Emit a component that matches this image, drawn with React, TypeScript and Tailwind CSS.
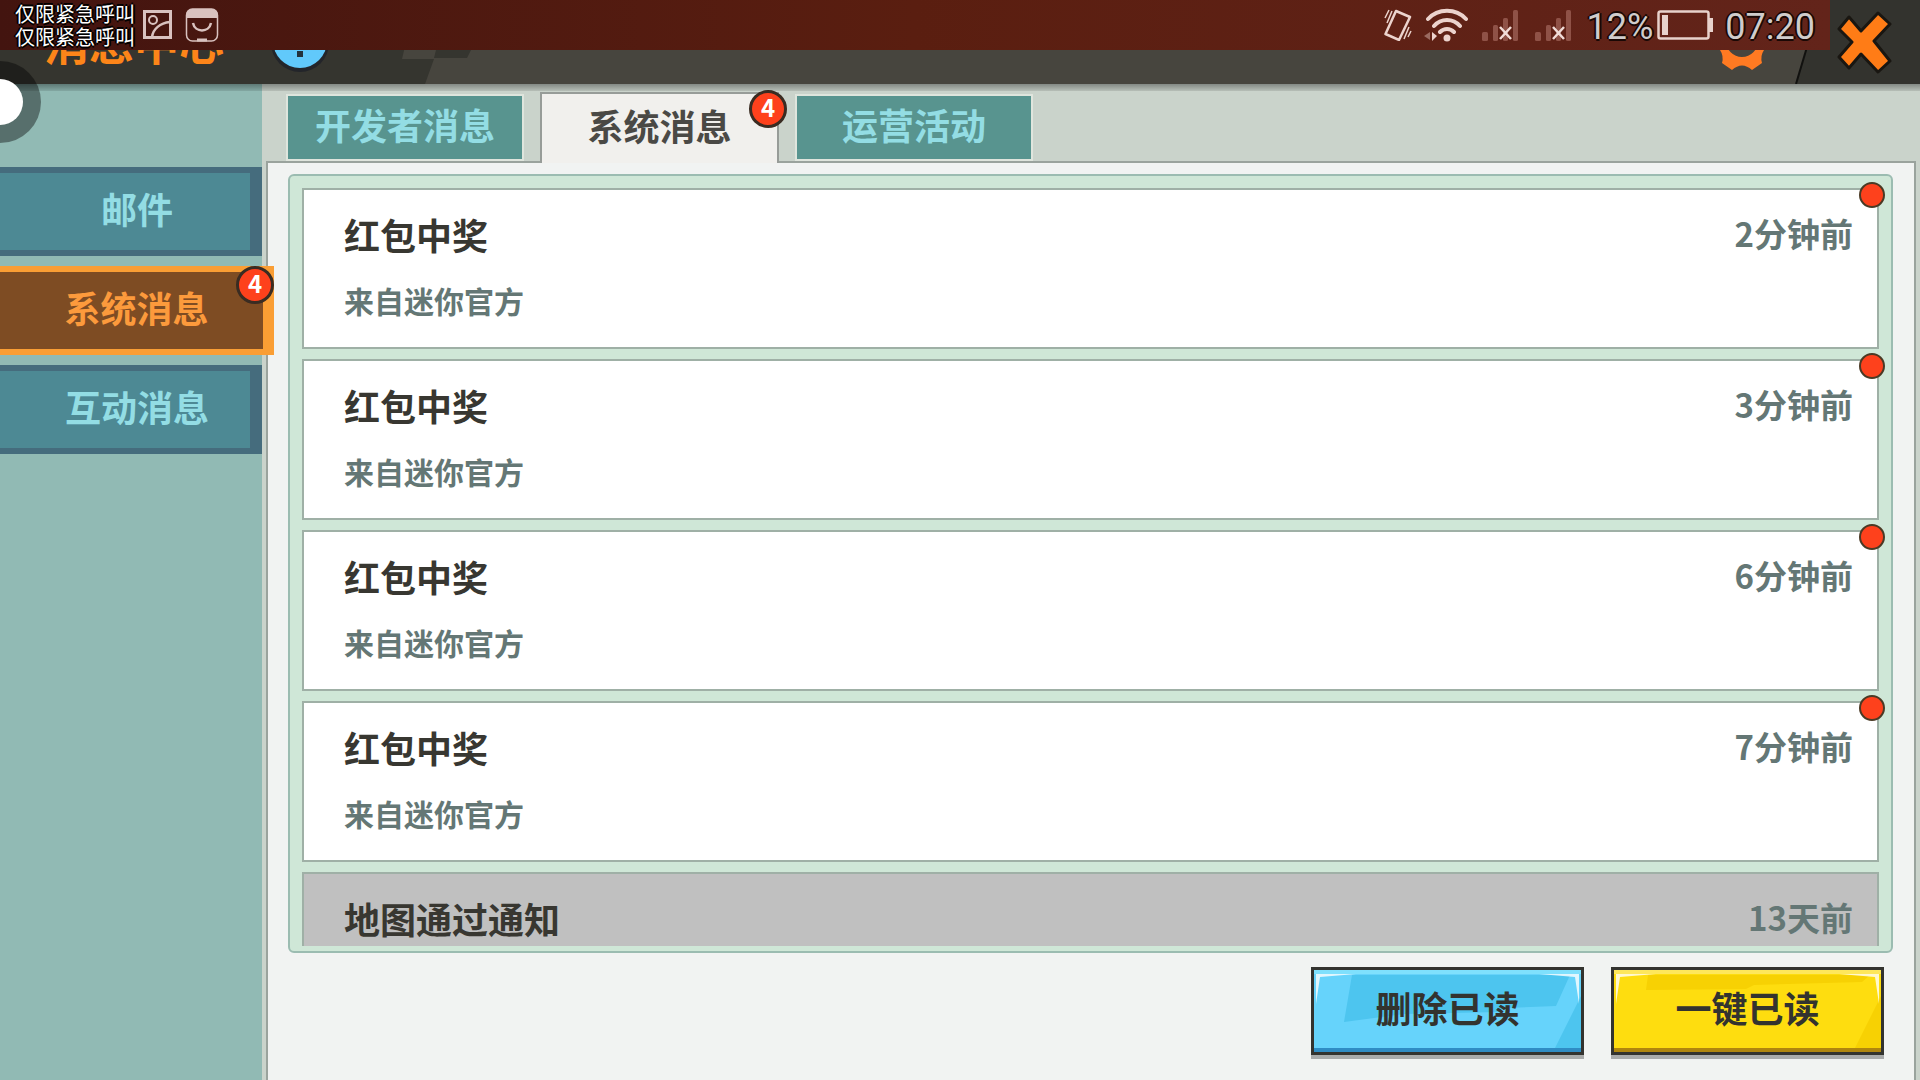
import { clsx } from "clsx";

const sideItems = [
  { label: "邮件", unread: 0 },
  { label: "系统消息", unread: 4, active: true },
  { label: "互动消息", unread: 0 },
];

const tabs = [
  { label: "开发者消息", unread: 0 },
  { label: "系统消息", unread: 4, active: true },
  { label: "运营活动", unread: 0 },
];

const messages = [
  { title: "红包中奖", from: "来自迷你官方", time: "2分钟前", read: false },
  { title: "红包中奖", from: "来自迷你官方", time: "3分钟前", read: false },
  { title: "红包中奖", from: "来自迷你官方", time: "6分钟前", read: false },
  { title: "红包中奖", from: "来自迷你官方", time: "7分钟前", read: false },
  { title: "地图通过通知", from: "", time: "13天前", read: true },
];

function Badge({ count, className }: { count: number; className: string }) {
  return (
    <span
      className={clsx(
        "absolute flex size-[38px] items-center justify-center rounded-full border-[3px] border-[#3a2c22] bg-[#fe411c] pb-1 text-2xl leading-none font-bold text-white",
        className
      )}
    >
      {count}
    </span>
  );
}

function Signal() {
  return (
    <svg className="h-8 w-9" viewBox="0 0 36 32" fill="none">
      <g fill="#8f5247">
        <rect x="0" y="23" width="6" height="9" rx="1.500" />
        <rect x="11" y="16" width="5" height="16" rx="1.500" />
        <rect x="21" y="9" width="5" height="23" rx="1.500" />
        <rect x="31" y="1" width="5" height="31" rx="1.500" />
      </g>
      <path d="M18 18l11 12M29 18L18 30" stroke="#f0dcd7" strokeWidth="2.500" />
    </svg>
  );
}

function StatusBar() {
  return (
    <div className="absolute top-0 left-0 z-20 flex h-[50px] w-[calc(100%-90px)] items-center justify-between bg-linear-to-r from-[#43140f] via-[#5a1e10] to-[#63241a] pr-[15px] pl-[15px]">
      <div className="flex items-center gap-2">
        <div className="text-xl leading-[23px] text-white [text-shadow:-2px_0_#000,2px_0_#000,0_-2px_#000,0_2px_#000]">
          <p>仅限紧急呼叫</p>
          <p>仅限紧急呼叫</p>
        </div>
        <svg className="h-[34px] w-[76px]" viewBox="0 0 76 34" fill="none" stroke="#d9c2bf">
          <path d="M1.500 3.500h26v26h-26z" strokeWidth="3" />
          <circle cx="10" cy="12" r="4" strokeWidth="2" />
          <path d="M9 29c1-8 8-14 18-15" strokeWidth="2.500" />
          <rect x="43.500" y="1" width="31" height="32" rx="6" strokeWidth="1.500" />
          <path d="M43 10V7a6 6 0 0 1 6-6h20a6 6 0 0 1 6 6v3z" fill="#d9c2bf" stroke="none" />
          <path d="M50 15c2 10 16 10 18 0" strokeWidth="2.500" />
          <path d="M54 32h10" strokeWidth="3" />
        </svg>
      </div>
      <div className="flex items-center font-[Roboto] text-4xl leading-none text-[#d0cccb] [text-shadow:-2px_0_#1a0805,2px_0_#1a0805,0_-2px_#1a0805,0_2px_#1a0805]">
        <svg className="mr-3 h-8 w-7" viewBox="0 0 28 32" fill="none" stroke="#ecd3cd" strokeWidth="2.500">
          <path d="M12 2L26 8 15 31 1.500 25z" strokeLinejoin="round" />
          <path d="M8 2L3 14M5 1L1 9M25 18l-5 12M27 22l-3 6" strokeWidth="1.500" />
        </svg>
        <svg className="mr-[14px] h-[34px] w-11" viewBox="0 0 44 34" fill="none" stroke="#ecd3cd" strokeWidth="4" strokeLinecap="round">
          <path d="M4 11c10-11 28-11 38 0M10 18c7-8 19-8 26 0M16 24c4-4 10-4 14 0" />
          <circle cx="23" cy="30" r="3.500" fill="#ecd3cd" stroke="none" />
          <path d="M0 28l6-4v8z" fill="#9a6a60" stroke="none" />
          <path d="M8 24v9l5-5z" fill="#ecd3cd" stroke="none" />
        </svg>
        <Signal />
        <span className="w-[17px]" />
        <Signal />
        <span className="ml-4 pt-1">12%</span>
        <svg className="mr-3 ml-1 h-[30px] w-14" viewBox="0 0 56 30" fill="none">
          <rect x="1.500" y="1.500" width="50" height="27" rx="2" stroke="#e8d2cc" strokeWidth="2.500" />
          <rect x="5" y="5" width="6" height="20" fill="#e8d2cc" />
          <path d="M52 8h4v14h-4z" fill="#e8d2cc" />
        </svg>
        <span className="pt-1">07:20</span>
      </div>
    </div>
  );
}

function Header() {
  return (
    <header className="relative flex h-[84px] shrink-0 items-center justify-between bg-[#35352f] pl-11">
      <svg className="absolute inset-y-0 right-0 left-[401px] h-full w-[calc(100%-401px)]" viewBox="0 0 1519 84" preserveAspectRatio="none">
        <path d="M40 0H1519V84H24L33 59H1L5 42H67L63 58H36z" fill="#47453e" />
        <path d="M35 50H70L66 58H33z" fill="#35352f" />
        <path d="M1420 0H1519V84H1395z" fill="#33332e" />
        <path d="M1420 0L1395 84" stroke="#11110f" strokeWidth="2" />
      </svg>
      <div className="relative flex items-center gap-[46px]">
        <h1 className="text-[45px] leading-[80px] font-bold text-[#fd8519]">消息中心</h1>
        <button type="button" aria-label="帮助" className="size-[60px] rounded-full">
          <svg viewBox="0 0 60 60">
            <circle cx="30" cy="31" r="29" fill="#23252a" />
            <circle cx="30" cy="29" r="27" fill="#61c9fb" />
            <path d="M27 39h6v6h-6zM27 14h6v20h-6z" fill="#23323c" />
          </svg>
        </button>
      </div>
      <div className="relative flex items-center gap-[66px] pr-7">
        <button type="button" aria-label="设置" className="size-14">
          <svg viewBox="0 0 56 56" fill="#ff7a22">
            <path
              fillRule="evenodd"
              d="M18 56L8 49Q10 42 6 36L2 32V24L6 20Q10 14 8 7L18 0Q28 9 38 0L48 7Q46 14 50 20L54 24V32L50 36Q46 42 48 49L38 56Q28 47 18 56ZM28 11a16 16 0 1 0 0 32a16 16 0 1 0 0-32Z"
            />
          </svg>
        </button>
        <button type="button" aria-label="关闭" className="h-[66px] w-14">
          <svg viewBox="0 0 56 66" fill="#ff7c16" stroke="#191611" strokeWidth="3" strokeLinejoin="round">
            <path d="M13 8L25 22 42 4 54 15 38 32 54 52 42 63 25 45 13 59 3 48 16 33 3 20z" />
          </svg>
        </button>
      </div>
    </header>
  );
}

function Sidebar() {
  return (
    <nav className="relative z-10 flex w-[262px] shrink-0 flex-col gap-[10px] bg-[#91bab4] pt-[83px]">
      {sideItems.map((item) => (
        <button
          key={item.label}
          type="button"
          className={clsx(
            "relative flex h-[89px] items-center justify-center border-y-[6px] pb-2 text-4xl font-bold",
            item.active
              ? "w-[274px] border-r-[11px] border-[#fa9e34] bg-[#7e4c23] pl-[10px] text-[#fc9a3c]"
              : "w-full border-r-[12px] border-[#456c7d] bg-[#4d8994] pl-6 text-[#93dde4]"
          )}
        >
          {item.label}
          {item.unread > 0 && <Badge count={item.unread} className="-top-[6px] -right-[11px]" />}
        </button>
      ))}
    </nav>
  );
}

function Tabs() {
  return (
    <div role="tablist" className="relative z-10 flex h-[79px] items-end pl-5">
      {tabs.map((tab) => (
        <button
          key={tab.label}
          type="button"
          role="tab"
          aria-selected={!!tab.active}
          className={clsx(
            "relative flex items-center justify-center text-4xl font-bold",
            tab.active
              ? "mx-4 h-[71px] w-[239px] border-x-2 border-t-2 border-[#979c98] bg-[#f1f0ed] pb-2 text-[#4a4945]"
              : "mb-[2px] h-[67px] w-[238px] border-2 border-[#dfe5dd] bg-[#58948f] pb-2 text-[#93dde4]"
          )}
        >
          {tab.label}
          {tab.unread > 0 && <Badge count={tab.unread} className="-top-1 -right-[10px]" />}
        </button>
      ))}
    </div>
  );
}

function MessageList() {
  return (
    <div className="mr-[21px] ml-5 min-h-0 flex-1 rounded-md border-2 border-[#9bbcb1] bg-[#cfe7d7] pb-[5px]">
      <ul className="flex h-full flex-col gap-[10px] overflow-hidden px-3 pt-3">
        {messages.map((message) => (
          <li
            key={message.time}
            className={clsx(
              "relative h-[161px] shrink-0 border-2 border-[#9fb0a6] pt-5 pr-6 pl-10",
              message.read ? "bg-[#c0c0c0]" : "bg-white"
            )}
          >
            <div className="flex h-12 items-center justify-between">
              <h2 className="text-4xl font-bold text-[#383731]">{message.title}</h2>
              <time className="text-[33px] font-bold text-[#647775]">{message.time}</time>
            </div>
            <p className="mt-6 text-3xl font-bold text-[#647775]">{message.from}</p>
            {!message.read && (
              <span className="absolute -top-2 -right-2 size-[26px] rounded-full border-2 border-[#4a3a25] bg-[#fe411c]" />
            )}
          </li>
        ))}
      </ul>
    </div>
  );
}

function ActionButton({ label, tone }: { label: string; tone: "blue" | "yellow" }) {
  const blue = tone === "blue";
  return (
    <button
      type="button"
      className={clsx(
        "relative h-[88px] w-[273px] border-[3px] border-[#33332f] pb-2 text-4xl font-bold text-[#33332f] shadow-[0_4px_0_#a9abab]",
        blue ? "bg-[#66d3fb]" : "bg-[#fedd0f]"
      )}
    >
      <svg className="absolute inset-0 size-full" viewBox="0 0 267 82" preserveAspectRatio="none">
        <path
          d={blue ? "M38 5H256L242 36 190 38 184 42 90 44 30 52z" : "M34 5H256L248 12 140 15 132 19 32 20z"}
          fill={blue ? "#4dc5ef" : "#f7d103"}
        />
        <path d="M267 26L240 80H267z" fill={blue ? "#4dc5ef" : "#f7d103"} />
        <path d="M0 0H267V4H0z" fill={blue ? "#7fe0fd" : "#fee75c"} />
        <path d="M2 34V4H42L6 7zM265 34V4H225L261 7z" fill="#fff" fillOpacity="0.8" />
        <path d="M0 78H267V82H0z" fill={blue ? "#2f8cc4" : "#b0860e"} />
      </svg>
      <span className="relative">{label}</span>
    </button>
  );
}

export default function App() {
  return (
    <div className="relative flex h-screen flex-col overflow-hidden bg-[#cad3cb] font-['Noto_Sans_CJK_SC',sans-serif]">
      <StatusBar />
      <Header />
      <div className="relative flex min-h-0 flex-1">
        <div className="absolute inset-x-0 top-0 z-20 h-[7px] bg-linear-to-b from-black/35 to-black/10" />
        <Sidebar />
        <main className="flex min-w-0 flex-1 flex-col px-1">
          <Tabs />
          <div className="-mt-[2px] flex min-h-0 flex-1 flex-col border-x-2 border-t-2 border-[#9aa39d] bg-[#f1f3f2] pt-[11px]">
            <MessageList />
            <div className="flex shrink-0 justify-end gap-[27px] pt-[14px] pr-[30px] pb-[25px]">
              <ActionButton label="删除已读" tone="blue" />
              <ActionButton label="一键已读" tone="yellow" />
            </div>
          </div>
        </main>
      </div>

      {/* Floating assist button, half off screen */}
      <button
        type="button"
        aria-label="悬浮球"
        className="absolute top-[61px] -left-[41px] z-30 flex size-[82px] items-center justify-center rounded-full bg-black/40"
      >
        <span className="size-[46px] rounded-full bg-white" />
      </button>
    </div>
  );
}
